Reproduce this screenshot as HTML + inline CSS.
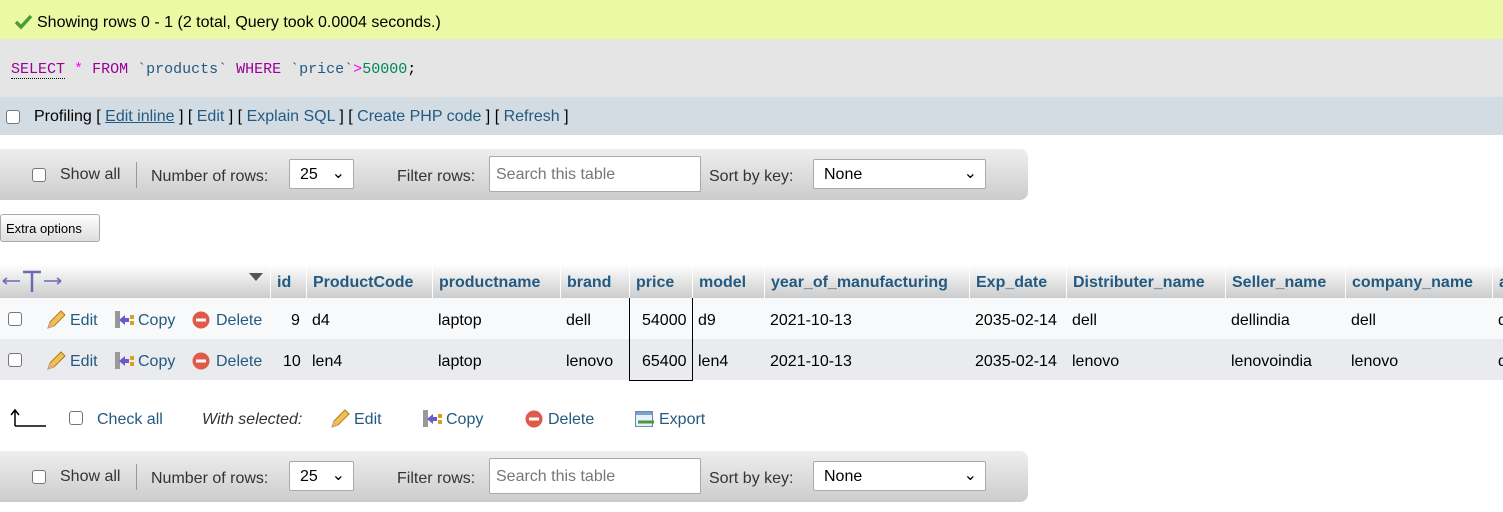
<!DOCTYPE html>
<html><head><style>
*{margin:0;padding:0;box-sizing:border-box}
body{width:1503px;height:512px;overflow:hidden;background:#fff;font-family:"Liberation Sans",Arial,sans-serif;font-size:16px;color:#000;position:relative}
.a{position:absolute;white-space:nowrap}
.t{margin-top:1px}
.lnk{color:#235a81}
.cb{position:absolute;width:14px;height:14px;border:1px solid #767676;border-radius:3px;background:#fff}
.nav{position:absolute;left:0;width:1028px;height:51px;background:linear-gradient(#eee,#ccc);border-radius:0 8px 8px 0;color:#333}
.sel{position:absolute;height:30px;border:1px solid #aaa;background:#fff;border-radius:2px;padding:6px 10px;color:#000}
.th{position:absolute;top:264px;height:34px;font-weight:bold;color:#235a81;padding:10px 6px;border-left:1px solid #fff}
</style></head><body>
<div class="a" style="left:0;top:0;width:1503px;height:39px;background:#ebf8a4"></div>
<svg class="a" style="left:14px;top:14px" width="19" height="16" viewBox="0 0 19 16"><path d="M2 8 L7 13 L17 2" stroke="#4a9a3a" stroke-width="3.5" fill="none"/></svg>
<div class="a t" style="left:37px;top:13px">Showing rows 0 - 1 (2 total, Query took 0.0004 seconds.)</div>
<div class="a" style="left:0;top:39px;width:1503px;height:58px;background:#e5e5e5"></div>
<div class="a" style="left:11px;top:61px;font-family:'Liberation Mono',monospace;font-size:15px"><span style="color:#909;border-bottom:1px dotted #000">SELECT</span> <span style="color:#f0f">*</span> <span style="color:#909">FROM</span> <span style="color:#235a81">`products`</span> <span style="color:#909">WHERE</span> <span style="color:#235a81">`price`</span><span style="color:#f0f">&gt;</span><span style="color:#085">50000</span>;</div>
<div class="a" style="left:0;top:97px;width:1503px;height:38px;background:#d3dce3"></div>
<div class="cb" style="left:6px;top:110px"></div>
<div class="a t" style="left:34px;top:107px">Profiling [ <span class="lnk" style="text-decoration:underline">Edit inline</span> ] [ <span class="lnk">Edit</span> ] [ <span class="lnk">Explain SQL</span> ] [ <span class="lnk">Create PHP code</span> ] [ <span class="lnk">Refresh</span> ]</div>

<div class="nav" style="top:149px">
<div class="cb" style="left:32px;top:19px"></div>
<div class="a t" style="left:60px;top:16px">Show all</div>
<div class="a" style="left:136px;top:13px;width:1px;height:26px;background:#999"></div>
<div class="a t" style="left:151px;top:18px">Number of rows:</div>
<div class="sel" style="left:289px;top:10px;width:65px">25 <span style="position:absolute;right:8px;top:3px">&#8964;</span></div>
<div class="a t" style="left:397px;top:18px">Filter rows:</div>
<div class="sel" style="left:489px;top:7px;width:212px;height:36px;color:#777;padding:9px 6px">Search this table</div>
<div class="a t" style="left:709px;top:18px">Sort by key:</div>
<div class="sel" style="left:813px;top:10px;width:173px">None <span style="position:absolute;right:8px;top:3px">&#8964;</span></div>
</div>
<div class="a" style="left:0;top:214px;width:100px;height:28px;border:1px solid #aaa;border-radius:3px;background:linear-gradient(#fff,#ddd);font-size:13px;padding:6px 5px">Extra options</div>

<div class="a" style="left:0;top:264px;width:1503px;height:34px;background:linear-gradient(#fff,#ccc)"></div>
<svg class="a" style="left:2px;top:269px" width="60" height="24"><path d="M1 12 H18 M1 12 L5 9 M1 12 L5 15 M42 12 H59 M59 12 L55 9 M59 12 L55 15" stroke="#6a6ab8" stroke-width="1.5" fill="none"/><path d="M21 3 H39 M30 3 V23" stroke="#6a6ab8" stroke-width="2.5" fill="none"/></svg>
<div class="a" style="left:249px;top:273px;width:0;height:0;border-left:7px solid transparent;border-right:7px solid transparent;border-top:8px solid #555"></div>
<div class="th" style="left:270px">id</div>
<div class="th" style="left:306px">ProductCode</div>
<div class="th" style="left:432px">productname</div>
<div class="th" style="left:560px">brand</div>
<div class="th" style="left:629px">price</div>
<div class="th" style="left:692px">model</div>
<div class="th" style="left:764px">year_of_manufacturing</div>
<div class="th" style="left:969px">Exp_date</div>
<div class="th" style="left:1066px">Distributer_name</div>
<div class="th" style="left:1225px">Seller_name</div>
<div class="th" style="left:1345px">company_name</div>
<div class="th" style="left:1492px">a</div>

<div class="a" style="left:0;top:298px;width:1503px;height:41px;background:#f8f9fa"></div>
<div class="a" style="left:0;top:339px;width:1503px;height:41px;background:#e9ebee"></div>
<div class="a" style="left:629px;top:298px;width:64px;height:83px;border:1px solid #000;border-top:none"></div>

<svg width="0" height="0" style="position:absolute"><defs>
<g id="pen"><path d="M3 19 L5 13 L16 2 L20 6 L9 17 Z" fill="#f0c050" stroke="#b07a20" stroke-width="1"/><path d="M3 19 L5 13 L9 17Z" fill="#e8b080"/></g>
<g id="cp"><rect x="1" y="1" width="5" height="17" fill="#999"/><path d="M5 10 L11 5 L11 8 L15 8 L15 12 L11 12 L11 15Z" fill="#6a5acd"/><rect x="16" y="5" width="4" height="4" fill="#d9a020"/><rect x="16" y="11" width="4" height="4" fill="#d9a020"/></g>
<g id="del"><circle cx="9" cy="9" r="8.5" fill="#e05a4a"/><rect x="4" y="7.5" width="10" height="3" fill="#fff"/></g>
</defs></svg>
<div class="cb" style="left:8px;top:312px"></div>
<svg class="a" style="left:45px;top:309px" width="22" height="21"><use href="#pen"/></svg>
<div class="a lnk t" style="left:70px;top:311px">Edit</div>
<svg class="a" style="left:114px;top:310px" width="22" height="20"><use href="#cp"/></svg>
<div class="a lnk t" style="left:138px;top:311px">Copy</div>
<svg class="a" style="left:192px;top:311px" width="18" height="18"><use href="#del"/></svg>
<div class="a lnk t" style="left:216px;top:311px">Delete</div>
<div class="cb" style="left:8px;top:353px"></div>
<svg class="a" style="left:45px;top:350px" width="22" height="21"><use href="#pen"/></svg>
<div class="a lnk t" style="left:70px;top:352px">Edit</div>
<svg class="a" style="left:114px;top:351px" width="22" height="20"><use href="#cp"/></svg>
<div class="a lnk t" style="left:138px;top:352px">Copy</div>
<svg class="a" style="left:192px;top:352px" width="18" height="18"><use href="#del"/></svg>
<div class="a lnk t" style="left:216px;top:352px">Delete</div>

<div class="a t" style="left:291px;top:311px">9</div><div class="a t" style="left:312px;top:311px">d4</div>
<div class="a t" style="left:438px;top:311px">laptop</div><div class="a t" style="left:566px;top:311px">dell</div>
<div class="a t" style="left:642px;top:311px">54000</div><div class="a t" style="left:698px;top:311px">d9</div>
<div class="a t" style="left:770px;top:311px">2021-10-13</div><div class="a t" style="left:975px;top:311px">2035-02-14</div>
<div class="a t" style="left:1072px;top:311px">dell</div><div class="a t" style="left:1231px;top:311px">dellindia</div>
<div class="a t" style="left:1351px;top:311px">dell</div><div class="a t" style="left:1498px;top:311px">d</div>

<div class="a t" style="left:283px;top:352px">10</div><div class="a t" style="left:312px;top:352px">len4</div>
<div class="a t" style="left:438px;top:352px">laptop</div><div class="a t" style="left:566px;top:352px">lenovo</div>
<div class="a t" style="left:642px;top:352px">65400</div><div class="a t" style="left:698px;top:352px">len4</div>
<div class="a t" style="left:770px;top:352px">2021-10-13</div><div class="a t" style="left:975px;top:352px">2035-02-14</div>
<div class="a t" style="left:1072px;top:352px">lenovo</div><div class="a t" style="left:1231px;top:352px">lenovoindia</div>
<div class="a t" style="left:1351px;top:352px">lenovo</div><div class="a t" style="left:1498px;top:352px">d</div>

<svg class="a" style="left:10px;top:408px" width="38" height="20"><path d="M5 18 L36 18 M5 18 L5 3 M1 7 L5 2 L9 7" stroke="#000" stroke-width="1.5" fill="none"/></svg>
<div class="cb" style="left:69px;top:411px"></div>
<div class="a lnk t" style="left:97px;top:410px">Check all</div>
<div class="a t" style="left:202px;top:410px;font-style:italic;color:#333">With selected:</div>
<svg class="a" style="left:329px;top:408px" width="22" height="21"><use href="#pen"/></svg>
<div class="a lnk t" style="left:354px;top:410px">Edit</div>
<svg class="a" style="left:422px;top:409px" width="22" height="20"><use href="#cp"/></svg>
<div class="a lnk t" style="left:446px;top:410px">Copy</div>
<svg class="a" style="left:525px;top:410px" width="18" height="18"><use href="#del"/></svg>
<div class="a lnk t" style="left:548px;top:410px">Delete</div>
<svg class="a" style="left:635px;top:411px" width="20" height="17"><rect x="0.5" y="0.5" width="17" height="15" fill="#e8f0f8" stroke="#6a8ab0"/><rect x="1" y="1" width="16" height="3" fill="#7aa0d0"/><path d="M3 11 H19" stroke="#4a9a3a" stroke-width="3"/></svg>
<div class="a lnk t" style="left:659px;top:410px">Export</div>

<div class="nav" style="top:451px">
<div class="cb" style="left:32px;top:19px"></div>
<div class="a t" style="left:60px;top:16px">Show all</div>
<div class="a" style="left:136px;top:13px;width:1px;height:26px;background:#999"></div>
<div class="a t" style="left:151px;top:18px">Number of rows:</div>
<div class="sel" style="left:289px;top:10px;width:65px">25 <span style="position:absolute;right:8px;top:3px">&#8964;</span></div>
<div class="a t" style="left:397px;top:18px">Filter rows:</div>
<div class="sel" style="left:489px;top:7px;width:212px;height:36px;color:#777;padding:9px 6px">Search this table</div>
<div class="a t" style="left:709px;top:18px">Sort by key:</div>
<div class="sel" style="left:813px;top:10px;width:173px">None <span style="position:absolute;right:8px;top:3px">&#8964;</span></div>
</div>
</body></html>
